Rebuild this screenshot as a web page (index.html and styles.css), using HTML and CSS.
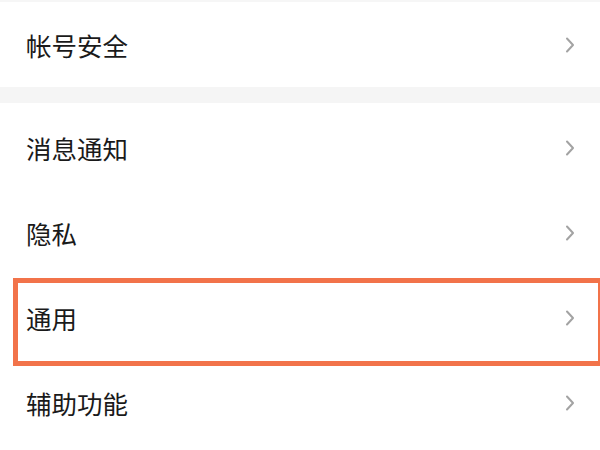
FILE: index.html
```html
<!DOCTYPE html>
<html lang="zh-CN">
<head>
<meta charset="utf-8">
<link rel="stylesheet" href="styles.css">
</head>
<body>
<div class="page">
  <div class="group group-top">
    <div class="row row-first">
      <span class="label">帐号安全</span>
      <svg class="chev" viewBox="0 0 10 16" width="10" height="16"><path d="M2 1.5 L8 8 L2 14.5" fill="none" stroke="#a3a3a3" stroke-width="2" stroke-linecap="round" stroke-linejoin="round"/></svg>
    </div>
  </div>
  <div class="gap"></div>
  <div class="group">
    <div class="row">
      <span class="label">消息通知</span>
      <svg class="chev" viewBox="0 0 10 16" width="10" height="16"><path d="M2 1.5 L8 8 L2 14.5" fill="none" stroke="#a3a3a3" stroke-width="2" stroke-linecap="round" stroke-linejoin="round"/></svg>
    </div>
    <div class="row">
      <span class="label">隐私</span>
      <svg class="chev" viewBox="0 0 10 16" width="10" height="16"><path d="M2 1.5 L8 8 L2 14.5" fill="none" stroke="#a3a3a3" stroke-width="2" stroke-linecap="round" stroke-linejoin="round"/></svg>
    </div>
    <div class="row row-hl">
      <span class="label">通用</span>
      <svg class="chev" viewBox="0 0 10 16" width="10" height="16"><path d="M2 1.5 L8 8 L2 14.5" fill="none" stroke="#a3a3a3" stroke-width="2" stroke-linecap="round" stroke-linejoin="round"/></svg>
      <div class="hl-box"></div>
    </div>
    <div class="row">
      <span class="label">辅助功能</span>
      <svg class="chev" viewBox="0 0 10 16" width="10" height="16"><path d="M2 1.5 L8 8 L2 14.5" fill="none" stroke="#a3a3a3" stroke-width="2" stroke-linecap="round" stroke-linejoin="round"/></svg>
    </div>
  </div>
</div>
</body>
</html>
```
FILE: styles.css
```css
html, body {
  margin: 0;
  padding: 0;
  background: #ffffff;
}
.page {
  width: 600px;
  height: 450px;
  overflow: hidden;
  font-family: "Noto Sans CJK SC", "Noto Sans", sans-serif;
  color: #1a1a1a;
}
.group-top {
  border-top: 2px solid #f6f6f6;
}
.gap {
  height: 16px;
  background: #f5f5f5;
}
.row {
  position: relative;
  height: 85px;
  display: flex;
  align-items: center;
  justify-content: space-between;
  padding: 4px 26px 0 26px;
  box-sizing: border-box;
}
.row-first {
  height: 85px;
  padding-top: 0;
}
.label {
  font-size: 25.5px;
  line-height: 1;
}
.chev {
  margin-right: -1px;
  display: block;
}
.hl-box {
  position: absolute;
  left: 13px;
  top: 5px;
  width: 590px;
  height: 88px;
  border: 5px solid #f2734a;
  box-sizing: border-box;
}
```
